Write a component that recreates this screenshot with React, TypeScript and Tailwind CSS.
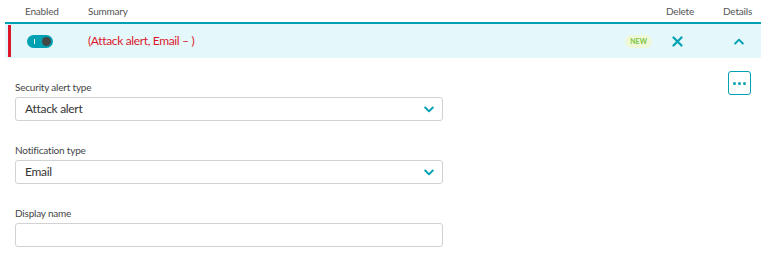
import React from "react";

function Chevron({ up = false }: { up?: boolean }) {
  return (
    <svg width="10" height="7" viewBox="0 0 10 7" className={up ? "rotate-180" : ""}>
      <path d="M1.2 1.5 L5 5.3 L8.8 1.5" fill="none" stroke="#00a1b2" strokeWidth="1.9" strokeLinecap="round" strokeLinejoin="round" />
    </svg>
  );
}

function Field({ label, value }: { label: string; value?: string }) {
  return (
    <div className="flex flex-col">
      <label className="text-[10px] tracking-[-0.2px] leading-[12px] text-[#454646] mb-[4px]">{label}</label>
      <div className="w-[428px] h-[24px] border border-[#d2d2d2] rounded-[3px] bg-white flex items-center justify-between pl-[9px] pr-[8px]">
        <span className="text-[12px] tracking-[-0.3px] text-[#353535]">{value}</span>
        {value && <Chevron />}
      </div>
    </div>
  );
}

export default function App() {
  return (
    <div className="w-[772px] h-[273px] bg-white font-['Lato',sans-serif] overflow-hidden">
      <div className="mx-[5px] w-[756px]">
        <div className="h-[22px] flex items-center text-[10px] tracking-[-0.2px] text-[#555]">
          <span className="ml-[20px] w-[63px]">Enabled</span>
          <span className="flex-1">Summary</span>
          <span className="w-[57px]">Delete</span>
          <span className="w-[38px]">Details</span>
        </div>
        <div className="h-[2px] bg-[#00a1b2]" />
        <div className="h-[34px] bg-[#e4f7fa] flex items-center">
          <div className="ml-[3px] w-[3px] h-[32px] bg-[#dc172a]" />
          <div className="ml-[16px] w-[26px] h-[13px] rounded-full bg-[#00a1b2] flex items-center justify-between px-[2px]">
            <span className="ml-[5px] w-[1px] h-[5px] bg-white" />
            <span className="w-[9px] h-[9px] rounded-full bg-[#454646]" />
          </div>
          <span className="ml-[35px] flex-1 text-[12px] tracking-[-0.35px] text-[#dc172a]">(Attack alert, Email – )</span>
          <span className="mr-[20px] px-[5px] h-[13px] rounded-full bg-[#eef8d8] text-[#7dc540] text-[7px] font-bold flex items-center">NEW</span>
          <svg width="11" height="11" viewBox="0 0 11 11" className="mr-[51px]">
            <path d="M1.5 1.5 L9.5 9.5 M9.5 1.5 L1.5 9.5" stroke="#00a1b2" strokeWidth="2.2" strokeLinecap="round" />
          </svg>
          <span className="mr-[17px] flex"><Chevron up /></span>
        </div>
        <div className="flex justify-between mt-[13px]">
          <div className="ml-[10px] mt-[10px] flex flex-col gap-[23px]">
            <Field label="Security alert type" value="Attack alert" />
            <Field label="Notification type" value="Email" />
            <Field label="Display name" />
          </div>
          <div className="mr-[10px] w-[23px] h-[24px] border border-[#00a1b2] rounded-[3px] flex items-center justify-center gap-[2px]">
            <span className="w-[3px] h-[3px] rounded-full bg-[#00a1b2]" />
            <span className="w-[3px] h-[3px] rounded-full bg-[#00a1b2]" />
            <span className="w-[3px] h-[3px] rounded-full bg-[#00a1b2]" />
          </div>
        </div>
      </div>
    </div>
  );
}
